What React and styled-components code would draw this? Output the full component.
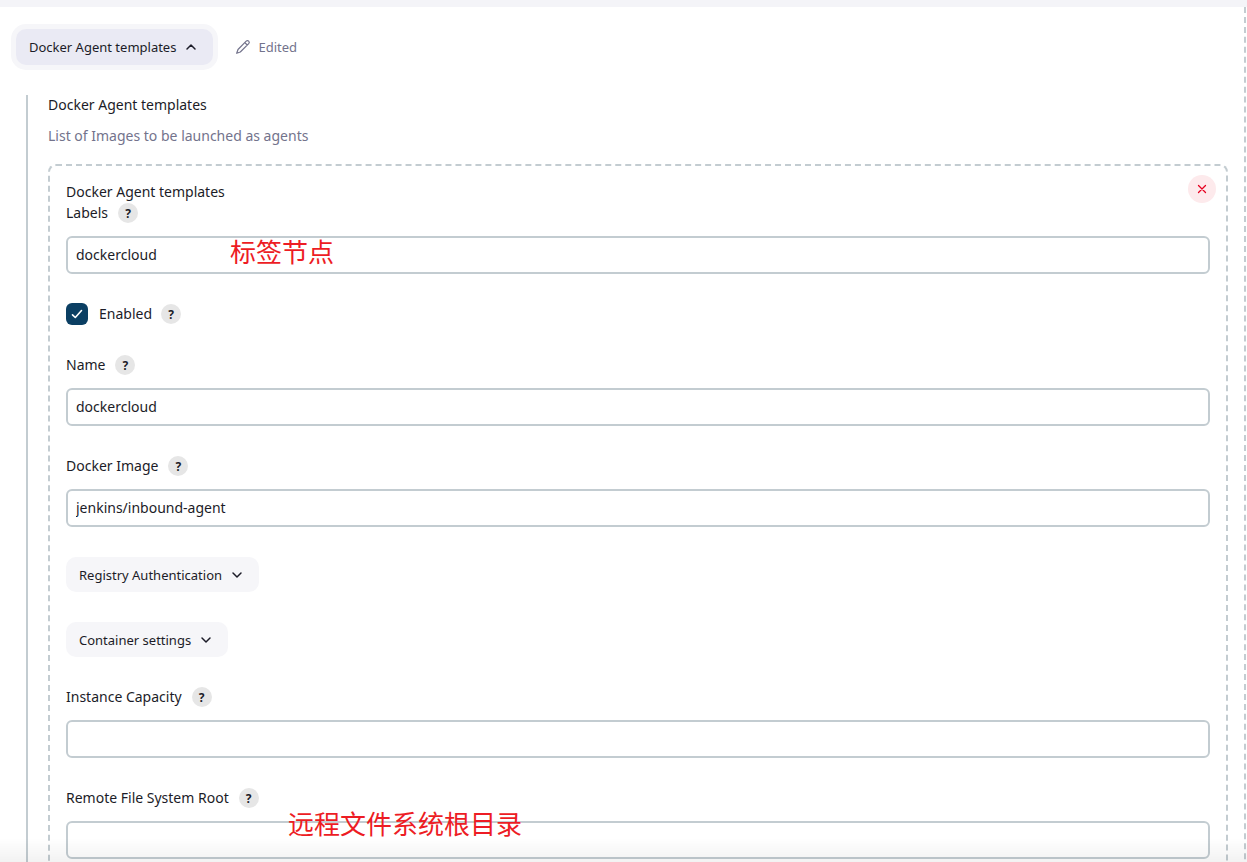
// Import libraries
import React from "react";
import styled, { createGlobalStyle } from "styled-components";

const Chevron = ({ up }) => (
  <svg width="12" height="12" viewBox="0 0 12 12" fill="none" aria-hidden="true">
    <path
      d={up ? "M2 8l4-4 4 4" : "M2 4l4 4 4-4"}
      stroke="currentColor"
      strokeWidth="1.5"
      strokeLinecap="round"
      strokeLinejoin="round"
    />
  </svg>
);

const Pencil = () => (
  <svg width="16" height="16" viewBox="0 0 16 16" fill="none" aria-hidden="true">
    <path
      d="M11.2 2.2a1.7 1.7 0 0 1 2.5 2.5L5.3 13 1.7 14.3 3 10.5z M9.9 3.7l2.3 2.3"
      stroke="currentColor"
      strokeWidth="1.2"
      strokeLinecap="round"
      strokeLinejoin="round"
    />
  </svg>
);

const Help = ({ topic }) => (
  <HelpButton type="button" title={`Help for feature: ${topic}`}>
    ?
  </HelpButton>
);

const TextField = ({ id, label, value = "", note, noteLeft, noteTop }) => (
  <Field>
    <LabelRow>
      <Label htmlFor={id}>{label}</Label>
      <Help topic={label} />
    </LabelRow>
    <TextInput id={id} type="text" defaultValue={value} />
    {note && (
      <Note $left={noteLeft} $top={noteTop}>
        {note}
      </Note>
    )}
  </Field>
);

const App = () => {
  return (
    <Page>
      <GlobalStyle />
      <CloudPanel>
        <Toolbar>
          <ExpandButton type="button" $active>
            Docker Agent templates
            <Chevron up />
          </ExpandButton>
          <Edited>
            <Pencil />
            Edited
          </Edited>
        </Toolbar>

        <Section>
          <SectionTitle>Docker Agent templates</SectionTitle>
          <SectionText>List of Images to be launched as agents</SectionText>

          <Template>
            <DeleteButton type="button" aria-label="Delete">
              <svg width="10" height="10" viewBox="0 0 10 10" aria-hidden="true">
                <path
                  d="m1.5 1.5 7 7m0-7-7 7"
                  stroke="currentColor"
                  strokeWidth="1.3"
                  strokeLinecap="round"
                />
              </svg>
            </DeleteButton>
            <TemplateTitle>Docker Agent templates</TemplateTitle>

            <Fields>
              <TextField
                id="labels"
                label="Labels"
                value="dockercloud"
                note="标签节点"
                noteLeft={164}
                noteTop={31}
              />
              <CheckRow>
                <CheckLabel>
                  <CheckBox>
                    <input type="checkbox" defaultChecked />
                    <svg width="12" height="12" viewBox="0 0 12 12" fill="none" aria-hidden="true">
                      <path
                        d="m1.5 6.8 2.8 2.7 6.2-7"
                        stroke="#fff"
                        strokeWidth="1.6"
                        strokeLinecap="round"
                        strokeLinejoin="round"
                      />
                    </svg>
                  </CheckBox>
                  Enabled
                </CheckLabel>
                <Help topic="Enabled" />
              </CheckRow>
              <TextField id="name" label="Name" value="dockercloud" />
              <TextField id="image" label="Docker Image" value="jenkins/inbound-agent" />
              <ExpandButton type="button">
                Registry Authentication
                <Chevron />
              </ExpandButton>
              <ExpandButton type="button">
                Container settings
                <Chevron />
              </ExpandButton>
              <TextField id="capacity" label="Instance Capacity" />
              <TextField
                id="remote-root"
                label="Remote File System Root"
                note="远程文件系统根目录"
                noteLeft={222}
                noteTop={18}
              />
            </Fields>
          </Template>
        </Section>
      </CloudPanel>
    </Page>
  );
};

const GlobalStyle = createGlobalStyle`
  * {
    box-sizing: border-box;
  }

  body {
    margin: 0;
    background: #fff;
    color: #1c1c28;
    font-family: "Noto Sans", "Noto Sans CJK SC", sans-serif;
    font-size: 14px;
    line-height: 20px;
  }

  button,
  input {
    font-family: inherit;
    color: inherit;
  }
`;

const Page = styled.main`
  height: 100vh;
  overflow: hidden;
  border-top: 7px solid #f4f4f8;

  &::after {
    content: "";
    position: fixed;
    left: 0;
    right: 0;
    bottom: 0;
    height: 24px;
    background: linear-gradient(rgba(0, 0, 0, 0), rgba(0, 0, 0, 0.05));
    pointer-events: none;
  }
`;

const CloudPanel = styled.div`
  margin-right: 1px;
  padding: 22px 16px 32px;
  border-right: 2px dashed #c3ccd1;
`;

const Toolbar = styled.div`
  display: flex;
  align-items: center;
  gap: 22px;
`;

const ExpandButton = styled.button`
  display: flex;
  align-items: center;
  gap: 9px;
  height: ${(props) => (props.$active ? "36px" : "35px")};
  padding: 0 16px 0 13px;
  border: none;
  border-radius: 10px;
  background: ${(props) => (props.$active ? "#eaeaf4" : "#f6f6f9")};
  box-shadow: ${(props) => (props.$active ? "0 0 0 5px #f6f6f9" : "none")};
  font-size: 13px;
  cursor: pointer;
`;

const Edited = styled.span`
  display: flex;
  align-items: center;
  gap: 7px;
  color: #73738c;
  font-size: 13px;
`;

const Section = styled.section`
  margin: 30px 0 0 10px;
  padding-left: 20px;
  border-left: 2px solid #c3ccd1;
`;

const SectionTitle = styled.div`
  margin-bottom: 11px;
`;

const SectionText = styled.div`
  margin-bottom: 18px;
  color: #73738c;
`;

const Template = styled.div`
  position: relative;
  padding: 16px;
  border: 2px dashed #c3ccd1;
  border-radius: 8px;
`;

const TemplateTitle = styled.div`
  margin-bottom: 1px;
`;

const DeleteButton = styled.button`
  position: absolute;
  top: 9px;
  right: 10px;
  display: flex;
  align-items: center;
  justify-content: center;
  width: 28px;
  height: 28px;
  padding: 0;
  border: none;
  border-radius: 50%;
  background: #fdeaec;
  color: #e6001f;
  cursor: pointer;
`;

const Fields = styled.div`
  display: flex;
  flex-direction: column;
  align-items: flex-start;
  gap: 30px;
`;

const Field = styled.div`
  position: relative;
  width: 100%;
`;

const LabelRow = styled.div`
  display: flex;
  align-items: center;
  gap: 10px;
  height: 20px;
  margin-bottom: 13px;
`;

const Label = styled.label`
  padding-bottom: 1px;
`;

const HelpButton = styled.button`
  display: flex;
  align-items: center;
  justify-content: center;
  width: 20px;
  height: 20px;
  padding: 0;
  border: none;
  border-radius: 50%;
  background: #e6e6e6;
  font-size: 12px;
  font-weight: 700;
  cursor: pointer;
`;

const TextInput = styled.input`
  display: block;
  width: 100%;
  height: 38px;
  padding: 0 8px 2px;
  border: 2px solid #c3ccd1;
  border-radius: 6px;
  background: #fff;
  font-size: 14px;
`;

const CheckRow = styled.div`
  display: flex;
  align-items: center;
  gap: 9px;
  height: 20px;
  margin-bottom: 1px;
`;

const CheckLabel = styled.label`
  display: flex;
  align-items: center;
  gap: 11px;
`;

const CheckBox = styled.span`
  display: grid;
  place-items: center;

  input,
  svg {
    grid-area: 1 / 1;
  }

  input {
    appearance: none;
    width: 22px;
    height: 22px;
    margin: 0;
    border-radius: 6px;
    background: #0b3f63;
  }

  svg {
    z-index: 1;
    pointer-events: none;
  }
`;

const Note = styled.span`
  position: absolute;
  left: ${(props) => props.$left}px;
  top: ${(props) => props.$top}px;
  color: #ed1c24;
  font-family: "Noto Sans CJK SC", sans-serif;
  font-size: 26px;
  line-height: 34px;
  white-space: nowrap;
  pointer-events: none;
`;

export default App;
